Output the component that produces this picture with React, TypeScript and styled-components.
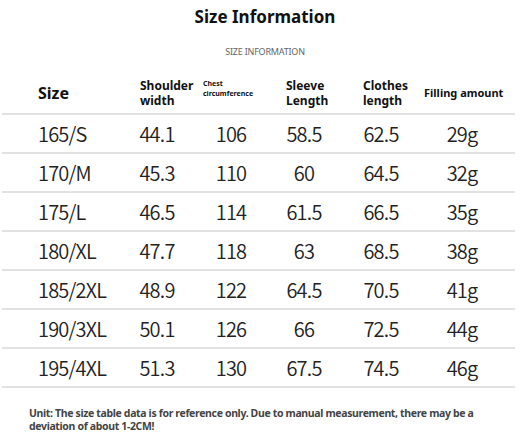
import styled, { createGlobalStyle } from 'styled-components'

const GlobalStyle = createGlobalStyle`
  html, body {
    margin: 0;
    padding: 0;
    background: #fff;
  }
  body {
    width: 530px;
    height: 448px;
    overflow: hidden;
    font-family: 'Noto Sans', 'Liberation Sans', sans-serif;
  }
`

const COLUMNS = '118px 74px 74px 72px 82px 80px 13px'

const rows = [
  ['165/S', '44.1', '106', '58.5', '62.5', '29g'],
  ['170/M', '45.3', '110', '60', '64.5', '32g'],
  ['175/L', '46.5', '114', '61.5', '66.5', '35g'],
  ['180/XL', '47.7', '118', '63', '68.5', '38g'],
  ['185/2XL', '48.9', '122', '64.5', '70.5', '41g'],
  ['190/3XL', '50.1', '126', '66', '72.5', '44g'],
  ['195/4XL', '51.3', '130', '67.5', '74.5', '46g']
]

export default function App() {
  return (
    <Page>
      <GlobalStyle />
      <Title>Size Information</Title>
      <Subtitle>SIZE INFORMATION</Subtitle>
      <Table>
        <HeaderRow>
          <HeadCell $pad={36} $size={16}>Size</HeadCell>
          <HeadCell $pad={20}>Shoulder<br />width</HeadCell>
          <HeadCell $pad={9} $size={7} $lift>Chest<br />circumference</HeadCell>
          <HeadCell $pad={18}>Sleeve<br />Length</HeadCell>
          <HeadCell $pad={23}>Clothes<br />length</HeadCell>
          <HeadCell $pad={2} $size={11}>Filling amount</HeadCell>
        </HeaderRow>
        {rows.map(row => (
          <DataRow key={row[0]}>
            {row.map((value, i) => (
              <DataCell key={i} $first={i === 0}>
                {value}
              </DataCell>
            ))}
          </DataRow>
        ))}
      </Table>
      <Note>
        Unit: The size table data is for reference only. Due to manual
        measurement, there may be a deviation of about 1-2CM!
      </Note>
    </Page>
  )
}

const Page = styled.div`
  display: flex;
  flex-direction: column;
  width: 530px;
  height: 448px;
  box-sizing: border-box;
  padding-top: 5px;
`

const Title = styled.h1`
  margin: 0;
  text-align: center;
  font-size: 17px;
  font-weight: 700;
  line-height: 24px;
  color: #111;
`

const Subtitle = styled.div`
  margin-top: 17px;
  text-align: center;
  font-size: 9px;
  letter-spacing: -0.2px;
  color: #666;
  line-height: 12px;
`

const Table = styled.div`
  margin: 15px 0 0 2px;
  width: 513px;
`

const HeaderRow = styled.div`
  display: grid;
  grid-template-columns: ${COLUMNS};
  align-items: center;
  height: 40px;
  border-bottom: 2px solid #e2e2e2;
`

const HeadCell = styled.div<{ $pad: number; $size?: number; $lift?: boolean }>`
  padding-left: ${p => p.$pad}px;
  margin-bottom: ${p => (p.$lift ? 8 : 0)}px;
  font-size: ${p => p.$size ?? 12}px;
  line-height: ${p => (p.$size ?? 12) + 3}px;
  font-weight: 700;
  color: #111;
  white-space: nowrap;
`

const DataRow = styled.div`
  display: grid;
  grid-template-columns: ${COLUMNS};
  align-items: center;
  height: 37px;
  border-bottom: 2px solid #e2e2e2;
`

const DataCell = styled.div<{ $first?: boolean }>`
  font-family: 'Noto Sans CJK SC DemiLight', 'Noto Sans CJK SC', 'Noto Sans', sans-serif;
  font-weight: 350;
  font-size: 20px;
  letter-spacing: -0.8px;
  color: #222;
  text-align: ${p => (p.$first ? 'left' : 'center')};
  padding-left: ${p => (p.$first ? '36px' : '0')};
`

const Note = styled.p`
  margin: 19px 0 0 29px;
  width: 460px;
  font-size: 10.5px;
  line-height: 13px;
  font-weight: 700;
  color: #444;
  letter-spacing: -0.35px;
`
